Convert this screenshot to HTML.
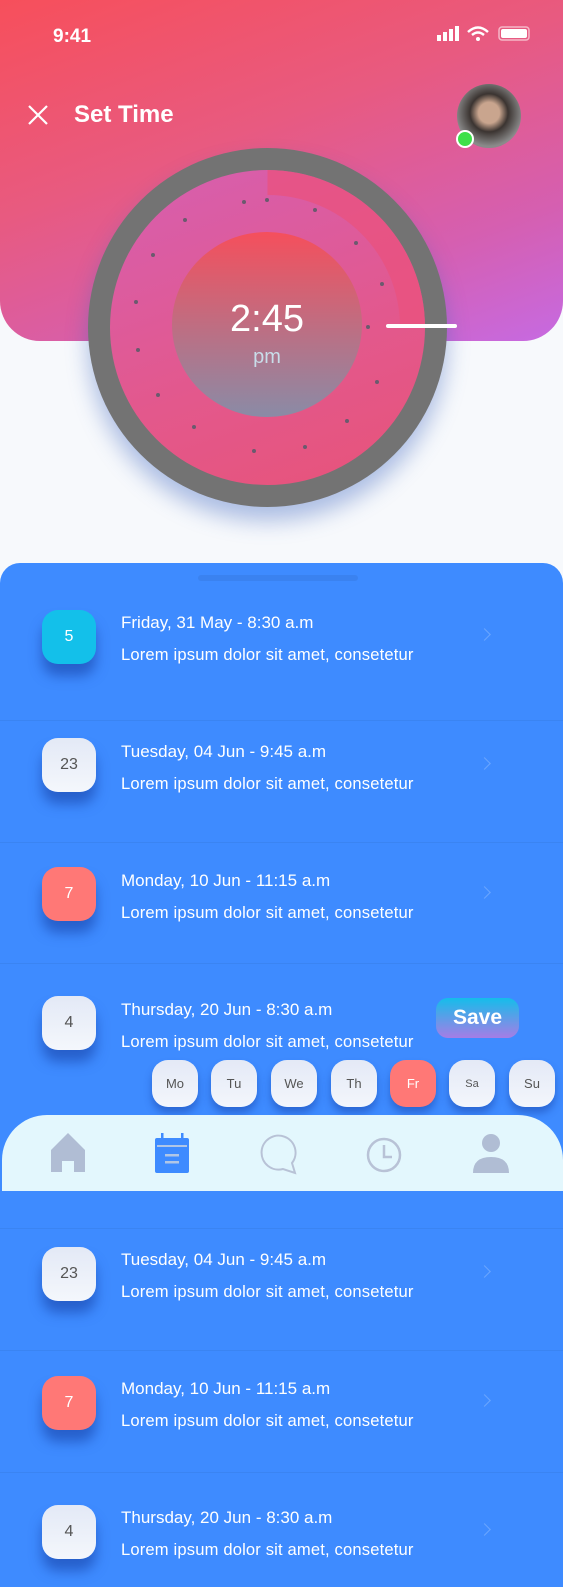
<!DOCTYPE html>
<html><head><meta charset="utf-8"><style>
*{margin:0;padding:0;box-sizing:border-box}
body{width:563px;height:1587px;background:#f7f9fc;font-family:"Liberation Sans",sans-serif;position:relative;overflow:hidden}
.hdr{position:absolute;left:0;top:0;width:563px;height:341px;border-radius:0 0 40px 40px;background:linear-gradient(160deg,#f74f5b 0%,#e85a80 40%,#d55fb1 75%,#c66ae2 100%)}
.abs{position:absolute}
.panel{position:absolute;left:0;top:563px;width:563px;height:1024px;background:#3e8bff;border-radius:20px 20px 0 0}
.sep{position:absolute;left:0;width:563px;height:1px;background:#3a84f2}
.badge{position:absolute;left:42px;width:54px;height:54px;border-radius:16px;font-size:16px;display:flex;align-items:center;justify-content:center;box-shadow:0 12px 12px rgba(20,60,160,.55)}
.w{background:linear-gradient(#e3e9f6,#f4f7fc);color:#555}
.t1{position:absolute;left:121px;color:#fff;font-size:17px}
.t2{position:absolute;left:121px;color:#fff;font-size:16.6px;letter-spacing:0.15px}
.chev{position:absolute;left:480px;width:9px;height:9px;border-top:1.5px solid #6aa6ff;border-right:1.5px solid #6aa6ff;transform:rotate(45deg)}
.pill{position:absolute;top:1060px;width:46px;height:47px;border-radius:16px;background:linear-gradient(#e4e9f6,#f3f6fc);color:#555;font-size:13px;display:flex;align-items:center;justify-content:center;box-shadow:0 6px 8px rgba(20,60,160,.45)}
</style></head><body>
<div class="hdr"></div>
<div class="abs" style="left:53px;top:26px;color:#fff;font-weight:bold;font-size:19px">9:41</div>
<svg class="abs" style="left:435px;top:24px" width="96" height="20">
<rect x="2" y="11" width="4" height="6" fill="#fff"/><rect x="8" y="8" width="4" height="9" fill="#fff"/><rect x="14" y="5" width="4" height="12" fill="#fff"/><rect x="20" y="2" width="4" height="15" fill="#fff"/>
<path d="M33 8 Q43 -1 53 8" stroke="#fff" stroke-width="2.5" fill="none"/><path d="M37 11 Q43 6 49 11" stroke="#fff" stroke-width="2.5" fill="none"/><circle cx="43" cy="15" r="2" fill="#fff"/>
<rect x="64" y="3" width="30" height="13" rx="3" fill="none" stroke="#f6b8c8" stroke-width="1.5"/><rect x="66" y="5" width="26" height="9" rx="2" fill="#fff"/>
</svg>
<svg class="abs" style="left:27px;top:104px" width="22" height="22"><path d="M2 2L20 20M20 2L2 20" stroke="#fff" stroke-width="2.2"/></svg>
<div class="abs" style="left:74px;top:101px;color:#fff;font-weight:bold;font-size:24px">Set Time</div>
<div class="abs" style="left:457px;top:84px;width:64px;height:64px;border-radius:50%;background:radial-gradient(circle at 50% 45%,#c9a58e 0 22%,#3b3431 40%,#8a8a8a 70%)"></div>
<div class="abs" style="left:456px;top:130px;width:18px;height:18px;border-radius:50%;background:#3ee04a;border:2px solid #fff"></div>
<div class="abs" style="left:88px;top:148px;width:359px;height:359px;border-radius:50%;background:#737373;box-shadow:0 14px 22px rgba(60,100,190,.4)"></div>
<div class="abs" style="left:110px;top:170px;width:315px;height:315px;border-radius:50%;background:linear-gradient(160deg,#d65fb0,#e3588c 60%,#e75379)"></div>
<svg class="abs" style="left:110px;top:170px" width="315" height="315">
<path d="M157.5 0 A157.5 157.5 0 0 1 315 157.5 L290 157.5 A132 132 0 0 0 157.5 25 Z" fill="#e9527e" opacity="0.75"/>
<g fill="#6b5a6e">
<circle cx="157" cy="30" r="2"/><circle cx="134" cy="32" r="2"/><circle cx="205" cy="40" r="2"/><circle cx="246" cy="73" r="2"/><circle cx="272" cy="114" r="2"/><circle cx="267" cy="212" r="2"/><circle cx="237" cy="251" r="2"/><circle cx="195" cy="277" r="2"/><circle cx="144" cy="281" r="2"/><circle cx="84" cy="257" r="2"/><circle cx="48" cy="225" r="2"/><circle cx="28" cy="180" r="2"/><circle cx="26" cy="132" r="2"/><circle cx="43" cy="85" r="2"/><circle cx="75" cy="50" r="2"/><circle cx="258" cy="157" r="2"/>
</g></svg>
<div class="abs" style="left:172px;top:232px;width:190px;height:185px;border-radius:50%;background:linear-gradient(#f54f5c,#8a8ba6)"></div>
<div class="abs" style="left:172px;top:298px;width:190px;text-align:center;color:#fff;font-size:38px">2:45</div>
<div class="abs" style="left:172px;top:346px;width:190px;text-align:center;color:#c8dde9;font-size:20px">pm</div>
<div class="abs" style="left:386px;top:324px;width:71px;height:4px;background:#fff;border-radius:2px"></div>

<div class="panel"></div>
<div class="abs" style="left:198px;top:575px;width:160px;height:6px;border-radius:3px;background:#3a82f0"></div>
<div class="sep" style="top:720px"></div><div class="sep" style="top:842px"></div><div class="sep" style="top:963px"></div><div class="sep" style="top:1228px"></div><div class="sep" style="top:1350px"></div><div class="sep" style="top:1472px"></div>

<div class="badge" style="top:610px;background:#13c0ea;color:#fff">5</div>
<div class="t1" style="top:613px">Friday, 31 May - 8:30 a.m</div><div class="t2" style="top:645px">Lorem ipsum dolor sit amet, consetetur</div><div class="chev" style="top:630px"></div>

<div class="badge w" style="top:738px">23</div>
<div class="t1" style="top:742px">Tuesday, 04 Jun - 9:45 a.m</div><div class="t2" style="top:774px">Lorem ipsum dolor sit amet, consetetur</div><div class="chev" style="top:759px"></div>

<div class="badge" style="top:867px;background:#ff7876;color:#fff">7</div>
<div class="t1" style="top:871px">Monday, 10 Jun - 11:15 a.m</div><div class="t2" style="top:903px">Lorem ipsum dolor sit amet, consetetur</div><div class="chev" style="top:888px"></div>

<div class="badge w" style="top:996px">4</div>
<div class="t1" style="top:1000px">Thursday, 20 Jun - 8:30 a.m</div><div class="t2" style="top:1032px">Lorem ipsum dolor sit amet, consetetur</div>
<div class="abs" style="left:436px;top:998px;width:83px;height:40px;border-radius:12px;background:linear-gradient(#15bdea,#a67de6);color:#fff;font-size:21px;font-weight:bold;display:flex;align-items:center;justify-content:center">Save</div>

<div class="pill" style="left:152px">Mo</div><div class="pill" style="left:211px">Tu</div><div class="pill" style="left:271px">We</div><div class="pill" style="left:331px">Th</div><div class="pill" style="left:390px;background:#ff7876;color:#fff">Fr</div><div class="pill" style="left:449px;font-size:11px">Sa</div><div class="pill" style="left:509px">Su</div>

<div class="abs" style="left:2px;top:1115px;width:561px;height:76px;background:#e3f7fd;border-radius:45px 45px 0 0"></div>
<svg class="abs" style="left:0;top:1115px" width="563" height="76">
<path d="M51 35 L68 18 L85 35 V57 H74 V46 H62 V57 H51Z" fill="#b0bdd4"/>
<rect x="155" y="23" width="34" height="35" rx="2" fill="#3e8bff"/><rect x="161" y="18" width="2.5" height="7" fill="#3e8bff"/><rect x="181" y="18" width="2.5" height="7" fill="#3e8bff"/>
<rect x="157" y="30" width="30" height="2" fill="#b0c6e6"/><rect x="165" y="39" width="14" height="2.5" fill="#b0c6e6"/><rect x="165" y="46" width="14" height="2.5" fill="#b0c6e6"/>
<path d="M283 54 A17 17 0 1 1 292 48 L295 58Z" fill="none" stroke="#b8c2d6" stroke-width="2"/>
<circle cx="384" cy="40" r="16" fill="none" stroke="#b8c2d6" stroke-width="2.5"/><path d="M384 30 V42 H392" fill="none" stroke="#b8c2d6" stroke-width="2.5"/>
<circle cx="491" cy="28" r="9" fill="#b0bdd4"/><path d="M473 58 Q473 42 491 42 Q509 42 509 58Z" fill="#b0bdd4"/>
</svg>

<div class="badge w" style="top:1247px">23</div>
<div class="t1" style="top:1250px">Tuesday, 04 Jun - 9:45 a.m</div><div class="t2" style="top:1282px">Lorem ipsum dolor sit amet, consetetur</div><div class="chev" style="top:1267px"></div>

<div class="badge" style="top:1376px;background:#ff7876;color:#fff">7</div>
<div class="t1" style="top:1379px">Monday, 10 Jun - 11:15 a.m</div><div class="t2" style="top:1411px">Lorem ipsum dolor sit amet, consetetur</div><div class="chev" style="top:1396px"></div>

<div class="badge w" style="top:1505px">4</div>
<div class="t1" style="top:1508px">Thursday, 20 Jun - 8:30 a.m</div><div class="t2" style="top:1540px">Lorem ipsum dolor sit amet, consetetur</div><div class="chev" style="top:1525px"></div>
</body></html>
